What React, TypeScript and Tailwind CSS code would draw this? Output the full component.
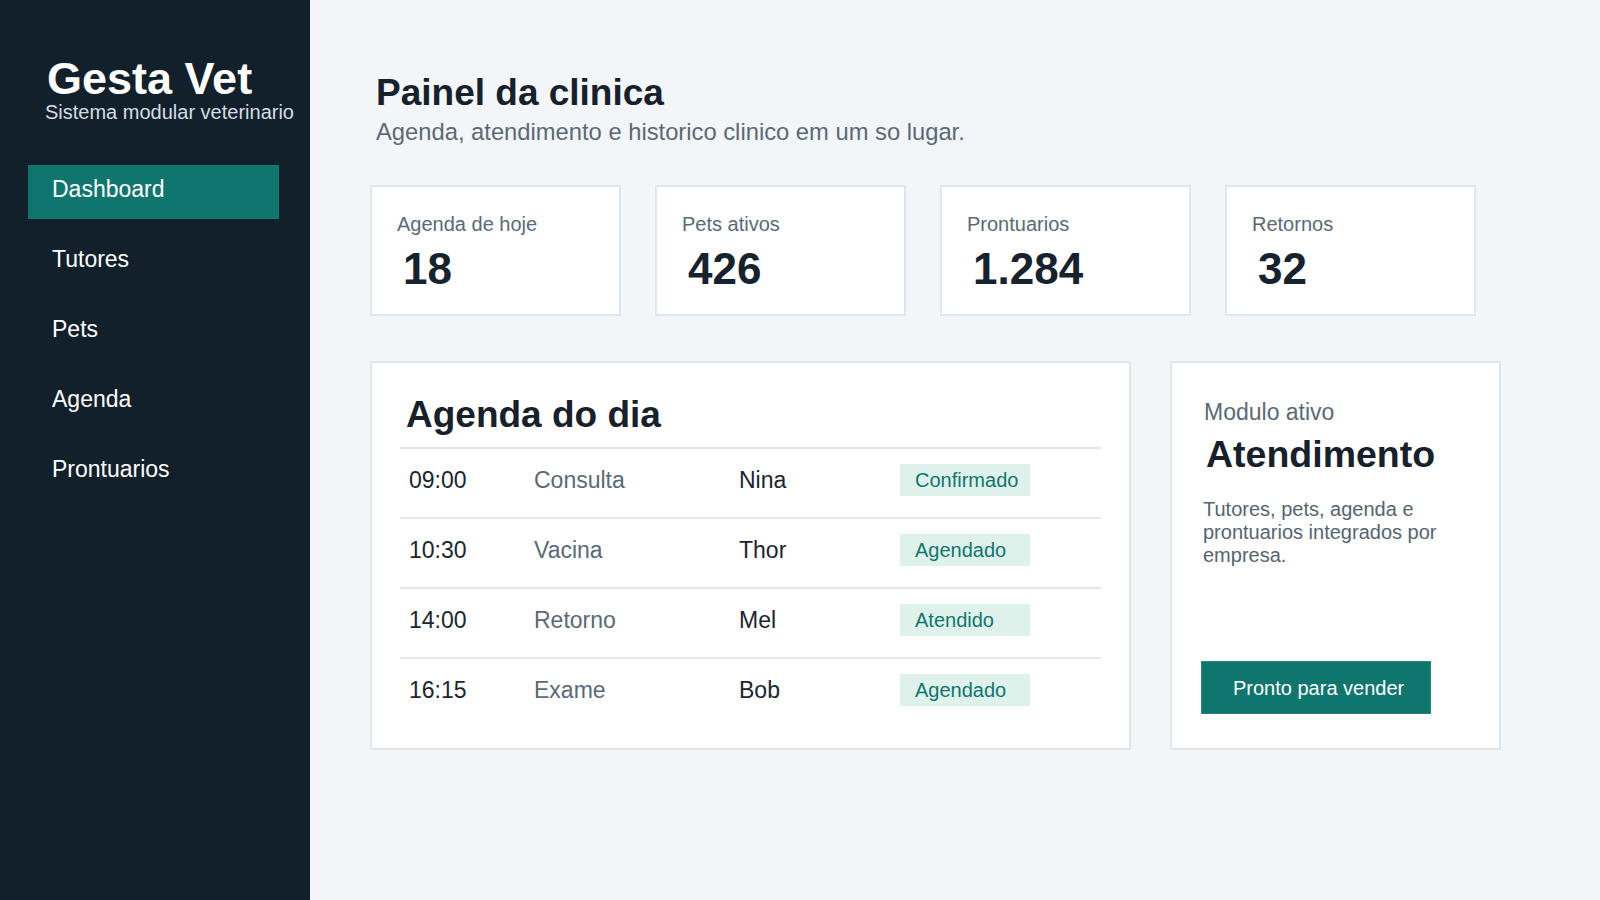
import React from "react";

const rows = [
  { t: "09:00", k: "Consulta", p: "Nina", s: "Confirmado" },
  { t: "10:30", k: "Vacina", p: "Thor", s: "Agendado" },
  { t: "14:00", k: "Retorno", p: "Mel", s: "Atendido" },
  { t: "16:15", k: "Exame", p: "Bob", s: "Agendado" },
];

const stats = [
  { l: "Agenda de hoje", v: "18" },
  { l: "Pets ativos", v: "426" },
  { l: "Prontuarios", v: "1.284" },
  { l: "Retornos", v: "32" },
];

const nav = ["Dashboard", "Tutores", "Pets", "Agenda", "Prontuarios"];

export default function App() {
  return (
    <div className="flex h-[900px] w-[1600px] overflow-hidden bg-[#f3f6f8] font-['Liberation_Sans',Arial,sans-serif]">
      <aside className="w-[310px] shrink-0 bg-[#12202b] pt-[57px]">
        <div className="pl-[45px]">
          <div className="ml-[2px] text-[45px] font-bold leading-[44px] text-white">Gesta Vet</div>
          <div className="mt-[1px] text-[20px] leading-[20px] text-[#d5dde4]">Sistema modular veterinario</div>
        </div>
        <nav className="mt-[43px] flex flex-col gap-[16px] px-[28px]">
          {nav.map((n, i) => (
            <div
              key={n}
              className={
                i === 0
                  ? "h-[54px] w-[251px] bg-[#0f766e] pl-[24px] pt-[11px] text-[23px] leading-[26px] text-white"
                  : "h-[54px] w-[251px] pl-[24px] pt-[11px] text-[23px] leading-[26px] text-white"
              }
            >
              {n}
            </div>
          ))}
        </nav>
      </aside>

      <main className="flex-1 pl-[60px] pt-[71px]">
        <div className="ml-[6px]">
          <h1 className="text-[37px] font-bold leading-[44px] text-[#17212b]">Painel da clinica</h1>
          <p className="mt-[3px] text-[23.75px] leading-[28px] text-[#5b6977]">
            Agenda, atendimento e historico clinico em um so lugar.
          </p>
        </div>

        <div className="mt-[39px] flex gap-[34px]">
          {stats.map((s) => (
            <div key={s.l} className="h-[131px] w-[251px] border-2 border-[#dfe6ec] bg-white pl-[25px] pt-[25px]">
              <div className="text-[20px] leading-[24px] text-[#5b6977]">{s.l}</div>
              <div className="ml-[6px] mt-[11px] text-[44px] font-bold leading-[44px] text-[#16222d]">{s.v}</div>
            </div>
          ))}
        </div>

        <div className="mt-[45px] flex gap-[39px]">
          <section className="w-[761px] border-2 border-[#dfe6ec] bg-white px-[28px] pb-[21px] pt-[30px]">
            <h2 className="mb-[10px] ml-[6px] text-[37px] font-bold leading-[44px] text-[#17212b]">Agenda do dia</h2>
            <div>
              {rows.map((r) => (
                <div
                  key={r.t}
                  className="grid grid-cols-[125px_205px_161px_1fr] items-center border-t-2 border-[#e1e7ed] pb-[21px] pt-[15px] text-[23px] leading-[26px]"
                >
                  <div className="pl-[9px] text-[#1a2530]">{r.t}</div>
                  <div className="pl-[9px] text-[#5b6977]">{r.k}</div>
                  <div className="pl-[9px] text-[#1a2530]">{r.p}</div>
                  <div className="pl-[9px]">
                    <div className="h-[32px] w-[130px] bg-[#def2eb] pl-[15px] text-[20px] leading-[32px] text-[#0f766e]">
                      {r.s}
                    </div>
                  </div>
                </div>
              ))}
            </div>
          </section>

          <section className="flex w-[331px] flex-col border-2 border-[#dfe6ec] bg-white pb-[34px] pl-[31px] pr-[29px] pt-[36px]">
            <div className="ml-[1px] text-[23px] leading-[26px] text-[#5b6977]">Modulo ativo</div>
            <div className="ml-[3px] mt-[7px] text-[37.5px] font-bold leading-[44px] text-[#17212b]">Atendimento</div>
            <p className="mt-[22px] text-[20px] leading-[23px] text-[#566472]">
              Tutores, pets, agenda e prontuarios integrados por empresa.
            </p>
            <button className="-ml-[2px] mt-auto h-[53px] w-[230px] border border-[#2b8379] bg-[#0f766e] pl-[31px] text-left text-[20px] leading-[24px] text-white">
              Pronto para vender
            </button>
          </section>
        </div>
      </main>
    </div>
  );
}
